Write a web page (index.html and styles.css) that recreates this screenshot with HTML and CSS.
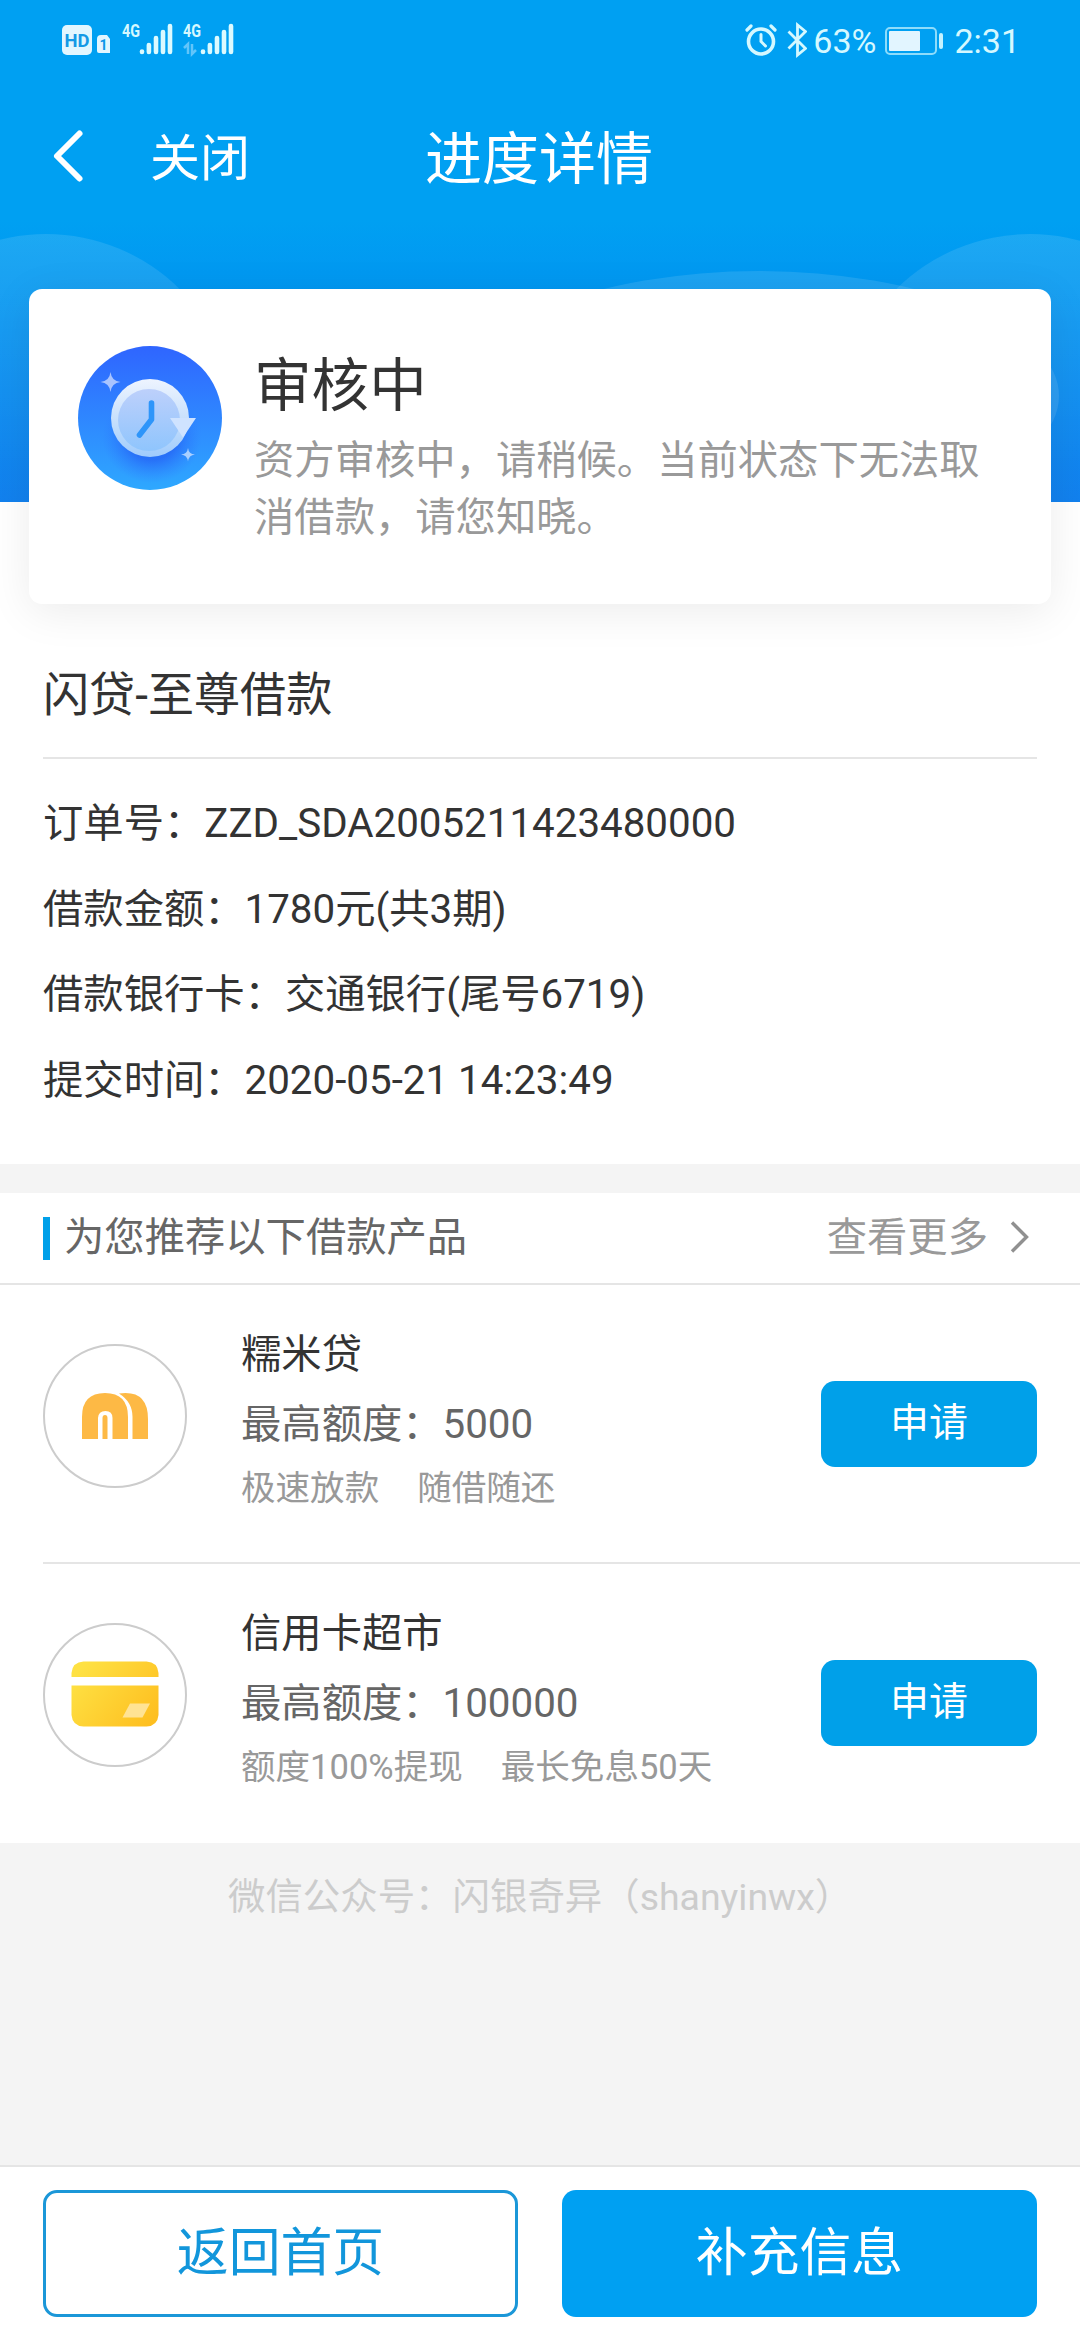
FILE: index.html
```html
<!DOCTYPE html>
<html lang="zh-CN">
<head>
<meta charset="utf-8">
<meta name="viewport" content="width=device-width">
<title>进度详情</title>
<link rel="stylesheet" href="styles.css">
</head>
<body>
<div class="page">
  <header class="hero">
    <svg class="hero-bg" viewBox="0 0 1080 502" aria-hidden="true">
      <defs>
        <linearGradient id="bubble" x1="0" y1="0" x2="0" y2="1">
          <stop offset="0" stop-color="#fff" stop-opacity=".11"/>
          <stop offset=".6" stop-color="#fff" stop-opacity=".05"/>
        </linearGradient>
      </defs>
      <circle cx="46" cy="424" r="190" fill="url(#bubble)"/>
      <circle cx="1030" cy="424" r="190" fill="url(#bubble)"/>
      <ellipse cx="759" cy="396" rx="300" ry="125" fill="#fff" fill-opacity=".11"/>
    </svg>
    <div class="status">
      <svg class="status-left" width="180" height="40" viewBox="0 0 180 40" aria-hidden="true">
        <rect x="2" y="6" width="30" height="30" rx="5" fill="#e2f6ff"/>
        <text class="hd" x="4.5" y="27.5" textLength="25" lengthAdjust="spacingAndGlyphs">HD</text>
        <path d="M37 20q0-4 4-4h6l3 4v14q0 0-2 0H39q-2 0-2-2z" fill="#e2f6ff"/>
        <text class="sim" x="39.500" y="31">1</text>
        <text class="net" x="62" y="17.500" textLength="18" lengthAdjust="spacingAndGlyphs">4G</text>
        <text class="net" x="123" y="17.500" textLength="18" lengthAdjust="spacingAndGlyphs">4G</text>
        <g stroke="#dcfaff" stroke-width="4.6" stroke-linecap="round">
          <path d="M82 32.5v.5M88.900 26v7M96 19v14M103 13v20M110 7v26"/>
          <path d="M143 32.500v.5M149.900 26v7M157 19v14M164 13v20M171 7v26"/>
        </g>
        <path d="M124 29l4-4v10M132 25v10l4-4" fill="none" stroke="#62c5fa" stroke-width="2.500"/>
      </svg>
      <div class="status-right">
        <svg width="62" height="40" viewBox="0 0 62 40" fill="none" stroke="#d5f8ff" stroke-width="3" stroke-linecap="round" aria-hidden="true">
          <circle cx="16" cy="21.500" r="12.500" stroke-width="3.600"/>
          <path d="M16 14.500v7l4.500 4.500" stroke-width="3"/>
          <path d="M2 10l4-4M26 6l4 4" stroke-width="3.200"/>
          <path d="M43.500 11.500l17 17-8 6.500V5l8 6.500-17 17" stroke-width="2.800" stroke-linecap="butt"/>
        </svg>
        <span class="pct">63%</span>
        <svg class="battery" width="60" height="28" viewBox="0 0 60 28" aria-hidden="true">
          <rect x="1" y="1" width="50" height="26" rx="4" fill="none" stroke="#8edcfb" stroke-width="2"/>
          <rect x="4" y="4" width="31" height="20" rx="1" fill="#e2f5ff"/>
          <rect x="54" y="6" width="4" height="16" rx="2" fill="#c5f2ff"/>
        </svg>
        <span class="time">2:31</span>
      </div>
    </div>
    <nav class="nav">
      <svg class="back" width="34" height="56" viewBox="0 0 34 56" aria-hidden="true"><path d="M29.500 5.500L7 28l22.500 22.500" fill="none" stroke="#fff" stroke-width="6" stroke-linecap="round" stroke-linejoin="round"/></svg>
      <span class="close">关闭</span>
      <h1 class="title">进度详情</h1>
    </nav>
  </header>

  <div class="sheet">
  <section class="card">
    <svg class="card-icon" viewBox="0 0 144 144" aria-hidden="true">
      <defs>
        <linearGradient id="disc" x1="0" y1="0" x2="0" y2="1"><stop offset="0" stop-color="#2f65ff"/><stop offset="1" stop-color="#2ea8ff"/></linearGradient>
        <linearGradient id="ring" x1="0" y1="0" x2="0" y2="1"><stop offset="0" stop-color="#eef4ff"/><stop offset=".55" stop-color="#c5dffc"/><stop offset="1" stop-color="#9fcbfc"/></linearGradient>
        <linearGradient id="face" x1="0" y1="0" x2="0" y2="1"><stop offset="0" stop-color="#bdd0fb"/><stop offset="1" stop-color="#8fc5fd"/></linearGradient>
        <radialGradient id="glow"><stop offset=".5" stop-color="#2563f5" stop-opacity=".75"/><stop offset="1" stop-color="#2f7bff" stop-opacity="0"/></radialGradient>
      </defs>
      <circle cx="72" cy="72" r="72" fill="url(#disc)"/>
      <ellipse cx="74" cy="91" rx="50" ry="46" fill="url(#glow)"/>
      <circle cx="72" cy="72" r="39" fill="url(#ring)"/>
      <circle cx="71" cy="74" r="31" fill="url(#face)"/>
      <path d="M92 72h26l-13 19.500z" fill="#cfe3ff"/>
      <path d="M73.500 57v16.500L61.500 89" fill="none" stroke="#2d95fa" stroke-width="5.600" stroke-linecap="round" stroke-linejoin="round"/>
      <path d="M32.500 26q1 9 10 10-9 1-10 10-1-9-10-10 9-1 10-10z" fill="#a9c4ff"/>
      <path d="M110 102q.7 6 7 6.500-6.300.7-7 7-.7-6.300-7-7 6.300-.5 7-6.500z" fill="#a9cfff"/>
    </svg>
    <div class="card-text">
      <h2>审核中</h2>
      <p>资方审核中，请稍候。当前状态下无法取消借款，请您知晓。</p>
    </div>
  </section>

  <section class="order">
    <h3>闪贷-至尊借款</h3>
    <ul>
      <li>订单号：ZZD_SDA2005211423480000</li>
      <li>借款金额：1780元(共3期)</li>
      <li>借款银行卡：交通银行(尾号6719)</li>
      <li>提交时间：2020-05-21 14:23:49</li>
    </ul>
  </section>
  </div>

  <section class="products">
    <div class="products-head">
      <span class="mark"></span>
      <h4>为您推荐以下借款产品</h4>
      <span class="more">查看更多</span>
      <svg width="24" height="36" viewBox="0 0 24 36" aria-hidden="true"><path d="M4 3.500L18.500 18 4 32.500" fill="none" stroke="#909090" stroke-width="3.400"/></svg>
    </div>
    <article class="item">
      <svg class="logo" viewBox="0 0 144 144" aria-hidden="true">
        <circle cx="72" cy="72" r="71" fill="#fff" stroke="#ccc" stroke-width="2"/>
        <path fill="#fdb945" d="M39 95V73q0-24 23-24t23 24v22H69.500V74q0-7-7-7t-7.500 7v21z"/>
        <path fill="#fdb945" d="M59.500 95V74q0-3 2.500-3t2.500 3v21zM76 49.500q29-4 29 25.500v20H89.500V73q0-15-13.500-23.500z"/>
      </svg>
      <div class="info">
        <div class="name">糯米贷</div>
        <div class="quota">最高额度：5000</div>
        <div class="tags"><span>极速放款</span><span>随借随还</span></div>
      </div>
      <button class="apply">申请</button>
    </article>
    <article class="item">
      <svg class="logo" viewBox="0 0 144 144" aria-hidden="true">
        <defs><linearGradient id="gold" gradientUnits="userSpaceOnUse" x1="38" y1="45" x2="108" y2="100"><stop offset="0" stop-color="#fee143"/><stop offset="1" stop-color="#febf20"/></linearGradient></defs>
        <circle cx="72" cy="72" r="71" fill="#fff" stroke="#ccc" stroke-width="2"/>
        <path fill="url(#gold)" d="M28.500 54v-4q1-11 12-11.500h63q11 .5 12 11.500v4zM28.500 62.500h87V92q-1 11-12 11.500h-63q-11-.5-12-11.500z"/>
        <path fill="#ffe394" d="M87 80.500h20L99.500 94.500h-20z"/>
      </svg>
      <div class="info">
        <div class="name">信用卡超市</div>
        <div class="quota">最高额度：100000</div>
        <div class="tags"><span>额度100%提现</span><span>最长免息50天</span></div>
      </div>
      <button class="apply">申请</button>
    </article>
  </section>

  <p class="wechat">微信公众号：闪银奇异（shanyinwx）</p>

  <footer class="actions">
    <button class="btn btn-outline">返回首页</button>
    <button class="btn btn-solid">补充信息</button>
  </footer>
</div>
</body>
</html>
```
FILE: styles.css
```css
* { box-sizing: border-box; margin: 0; padding: 0; }
html { font-size: 28.8px; }
body {
  background: #f4f4f4;
  color: #333;
  font-family: Roboto, "Noto Sans CJK SC", sans-serif;
}
h1, h2, h3, h4 { font-weight: 400; }
svg { display: block; flex: none; }
ul { list-style: none; }
button { font-family: inherit; border: 0; }

.page {
  width: 1080px;
  height: 2340px;
  display: flex;
  flex-direction: column;
  overflow: hidden;
}

/* top area */
.hero {
  position: relative;
  flex: none;
  height: 502px;
  margin-bottom: -213px;
  background: linear-gradient(#00a0f2 0, #00a0f2 220px, #067aed 502px);
  color: #fff;
}
.hero-bg { position: absolute; inset: 0; width: 1080px; height: 502px; }
.status, .nav { position: relative; display: flex; align-items: center; }
.status {
  height: 80px;
  padding: 0 60px;
  justify-content: space-between;
  color: #d5f8ff;
  font-size: 34px;
}
.status-left { margin-bottom: 3px; }
.hd { font: 700 19px Roboto, sans-serif; fill: #1599e6; }
.sim { font: 700 14px Roboto, sans-serif; fill: #0d96e8; }
.net { font: 700 18px Roboto, sans-serif; fill: #d5f8ff; }
.status-right { display: flex; align-items: center; height: 80px; }
.status-right span { padding-top: 2px; }
.status-right .pct { margin-left: 6px; }
.status-right .battery { margin: 1px 9px 0 9px; }
.nav { height: 157px; padding-left: 50px; }
.back { margin-bottom: 5px; }
.close { margin-left: 66px; padding-top: 1px; font-size: 50px; line-height: 70px; }
.title { margin-left: 175px; padding-top: 3px; font-size: 57px; line-height: 80px; }

/* white sheet that starts under the blue area, behind the card */
.sheet {
  flex: none;
  background: linear-gradient(transparent 213px, #fff 213px);
}

/* status card */
.card {
  position: relative;
  display: flex;
  width: 1022px;
  height: 315px;
  margin-left: 29px;
  padding: 57px 49px 0;
  background: #fff;
  border-radius: 13px;
  box-shadow: 0 8px 44px rgba(0, 0, 0, .08);
}
.card-icon { width: 144px; height: 144px; }
.card-text { margin-left: 32px; width: 726px; }
.card-text h2 { font-size: 2rem; line-height: 82px; }
.card-text p { margin-top: 4px; font-size: 1.4rem; line-height: 57px; color: #999; }

/* order details */
.order { height: 560px; padding: 54px 43px 0; }
.order h3 { height: 101px; font-size: 1.6rem; line-height: 75px; border-bottom: 2px solid #e5e5e5; }
.order ul { padding-top: 22px; }
.order li { font-size: 1.4rem; line-height: 85.6px; }

/* recommended products */
.products { flex: none; margin-top: 29px; background: #fff; }
.products-head {
  display: flex;
  align-items: center;
  height: 92px;
  padding: 0 48px 0 43px;
  border-bottom: 2px solid #e5e5e5;
  font-size: 1.4rem;
  line-height: 60px;
}
.mark { width: 7px; height: 43px; background: #00a0e9; }
.products-head h4 { margin-left: 14px; font-size: inherit; color: #666; }
.more { margin-left: auto; margin-right: 20px; color: #999; }
.products-head svg { margin-bottom: 2px; }
.item { display: flex; height: 277px; margin-left: 43px; padding-right: 43px; }
.item + .item { border-top: 2px solid #e5e5e5; height: 281px; }
.logo { width: 144px; height: 144px; margin-top: 59px; }
.info { margin-left: 54px; padding-top: 35px; }
.name { font-size: 1.4rem; line-height: 70px; }
.quota { font-size: 1.4rem; line-height: 69px; color: #666; }
.tags { display: flex; gap: 38px; font-size: 1.2rem; line-height: 59px; color: #999; }
.apply {
  width: 216px;
  height: 86px;
  margin: 96px 0 0 auto;
  padding-bottom: 3px;
  border-radius: 14px;
  background: #00a0e9;
  color: #fff;
  font-size: 38.9px;
  line-height: 83px;
}

.wechat { margin-top: 24px; padding-left: 228px; font-size: 1.3rem; line-height: 60px; color: #ccc; }

/* bottom actions */
.actions {
  flex: none;
  display: flex;
  justify-content: space-between;
  height: 175px;
  margin-top: auto;
  padding: 23px 43px;
  background: #fff;
  border-top: 2px solid #e5e5e5;
}
.btn { width: 475px; height: 127px; border-radius: 14px; font-size: 1.8rem; line-height: 120px; }
.btn-outline { border: 3px solid #1b97d8; background: #fff; color: #1296db; }
.btn-solid { background: #00a0f2; color: #fff; }
```
